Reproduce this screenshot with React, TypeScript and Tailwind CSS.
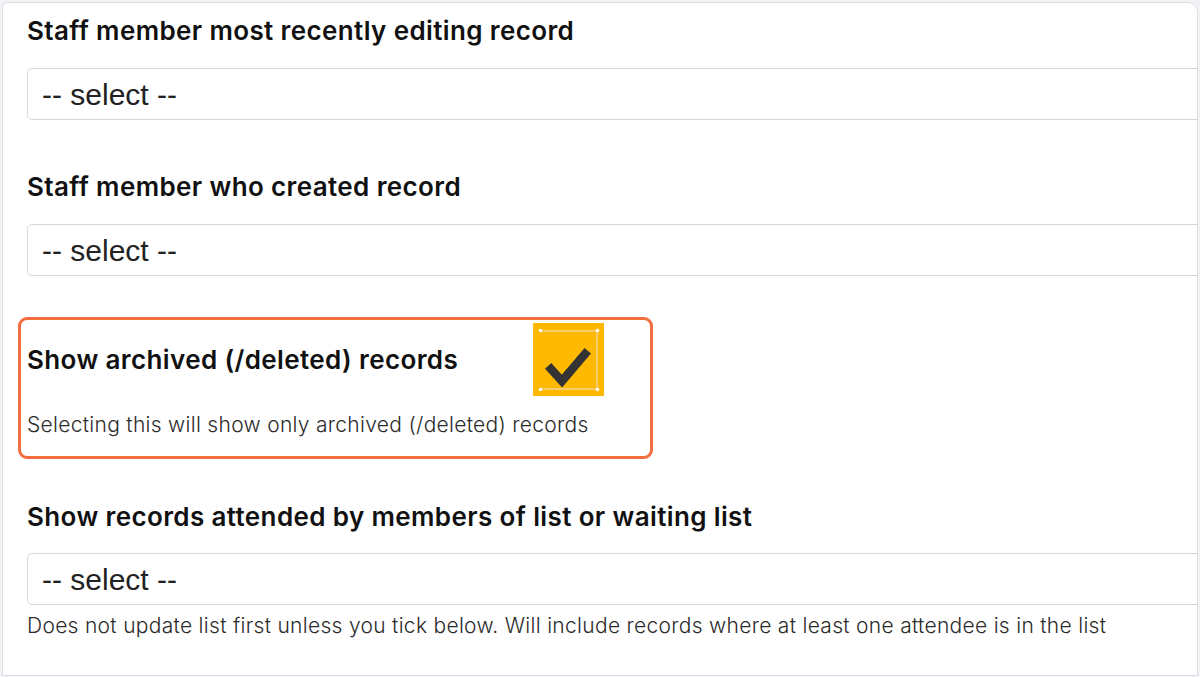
import React from "react";

function SelectBox() {
  return (
    <div className="h-[52px] w-[1200px] rounded-[5px] border border-[#d6d6d6] bg-white flex items-center pl-[14px] text-[30px] text-[#222] [font-family:'Liberation_Sans',Arial,sans-serif]">
      -- select --
    </div>
  );
}

function Heading({ children }: { children: React.ReactNode }) {
  return (
    <div className="h-[30px] leading-[30px] text-[26px] font-semibold text-[#111] tracking-[0.38px] whitespace-nowrap">
      {children}
    </div>
  );
}

export default function App() {
  return (
    <div className="w-[1200px] h-[677px] bg-[#f1f1f6] pt-[2px] pl-[2px] overflow-hidden [font-family:Inter,'Noto_Sans',sans-serif]">
      <div className="w-[1196px] h-[674px] bg-white border border-[#dcdce3] rounded-tl-[6px] rounded-tr-[10px] overflow-hidden pl-[24px] pt-[13px]">
        <Heading>Staff member most recently editing record</Heading>
        <div className="mt-[22px]">
          <SelectBox />
        </div>
        <div className="mt-[52px]">
          <Heading>Staff member who created record</Heading>
        </div>
        <div className="mt-[22px]">
          <SelectBox />
        </div>
        <div className="mt-[41px] -ml-[9px] w-[635px] h-[142px] rounded-[9px] border-[3px] border-[#f46d3f] pl-[6px] pt-[3px]">
          <div className="flex items-center h-[73px]">
            <div className="w-[506px]">
              <Heading>Show archived (/deleted) records</Heading>
            </div>
            <div className="relative w-[71px] h-[73px] bg-[#ffb900]">
              <div className="absolute left-[7px] top-[7px] right-[6px] bottom-[6px] border-t-2 border-b-2 border-r-2 border-[#f5cd6e]" />
              <div className="absolute left-[6px] top-[6px] w-[3px] h-[3px] bg-white" />
              <div className="absolute right-[5px] top-[6px] w-[3px] h-[3px] bg-white" />
              <div className="absolute left-[6px] bottom-[5px] w-[3px] h-[3px] bg-white" />
              <div className="absolute right-[5px] bottom-[5px] w-[3px] h-[3px] bg-white" />
              <svg className="absolute inset-0" width="71" height="73" viewBox="0 0 71 73">
                <path d="M18 46 L29 58 L52 31" fill="none" stroke="#333" strokeWidth="8.5" strokeLinecap="square" strokeLinejoin="miter" />
              </svg>
            </div>
          </div>
          <div className="mt-[17px] h-[24px] leading-[24px] text-[21px] font-light text-[#2b2b2b] tracking-[0.3px] whitespace-nowrap">
            Selecting this will show only archived (/deleted) records
          </div>
        </div>
        <div className="mt-[43px]">
          <Heading>Show records attended by members of list or waiting list</Heading>
        </div>
        <div className="mt-[21px]">
          <SelectBox />
        </div>
        <div className="mt-[9px] h-[24px] leading-[24px] text-[21px] font-light text-[#2b2b2b] tracking-[0.3px] whitespace-nowrap">
          Does not update list first unless you tick below. Will include records where at least one attendee is in the list
        </div>
      </div>
    </div>
  );
}
